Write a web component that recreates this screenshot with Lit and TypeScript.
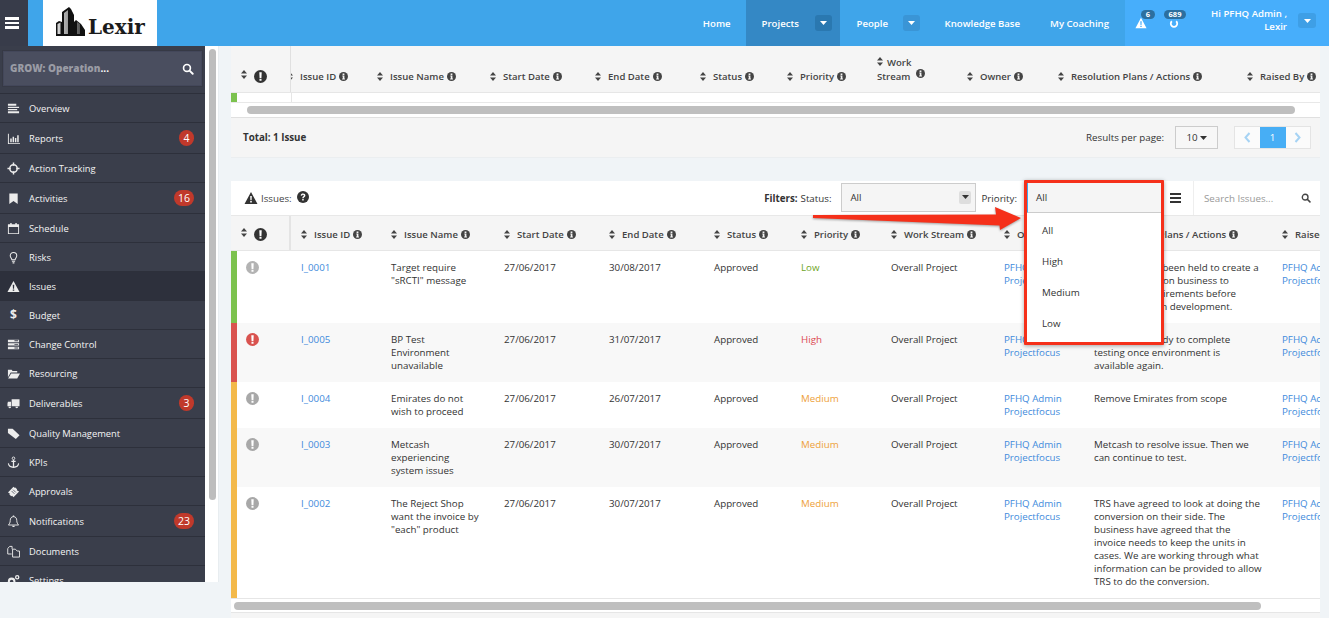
import { LitElement, html, css, svg } from "lit";
import { customElement } from "lit/decorators.js";

const ic = (body: unknown, size = 13) => html`<svg class="ic" width=${size} height=${size} viewBox="0 0 14 14" fill="currentColor">${body}</svg>`;

const icons: Record<string, unknown> = {
  overview: svg`<path d="M1 2h9v2H1zM1 5h12v1.5H1zM1 7.5h10V9H1zM1 10h12v2H1z"/>`,
  reports: svg`<path d="M1 2h1v10h12v1H1z"/><path d="M3.5 7h1.6v4H3.500zM6 5h1.600v6H6zM8.500 6.500h1.600V11H8.500zM11 3.500h1.600V11H11z"/>`,
  target: svg`<circle cx="7" cy="7" r="4" fill="none" stroke="currentColor" stroke-width="1.600"/><path d="M6.200 0.500h1.600v3.500H6.200zM6.200 10h1.600v3.500H6.200zM0.500 6.200H4v1.600H0.500zM10 6.200h3.500v1.600H10z"/>`,
  bookmark: svg`<path d="M2.500 1.500h9v11.500L7 9.800 2.500 13z"/>`,
  calendar: svg`<path fill-rule="evenodd" d="M1 2.500h2.500V1h1.500v1.500h4V1h1.500v1.500H13V13H1zM2 5.500V12h10V5.500z"/>`,
  bulb: svg`<path fill="none" stroke="currentColor" stroke-width="1.100" d="M5.300 9.500C5 7.800 3.500 7 3.500 5a3.500 3.500 0 0 1 7 0c0 2-1.500 2.800-1.800 4.500z"/><path d="M5.300 10.500h3.400v1.200H5.300zM6 12.200h2V13.500H6z"/>`,
  warning: svg`<path fill-rule="evenodd" d="M7 1l6.500 12H.5zM6.200 5l.2 4.300h1.200L7.800 5zM6.200 10.100v1.500h1.600v-1.500z"/>`,
  change: svg`<path d="M1 2h12v2.500H1zM1 5.700h12v2.500H1zM1 9.500h12V12H1z" /><path d="M8 2.500h4v1H8zM8 6.400h4v1H8zM8 10.200h4v1H8z" fill="#3a3e4b"/>`,
  folder: svg`<path d="M1 3h4l1 1.300h5V6H4L1 11zM4.500 7H14l-3 5.500H1.200z"/>`,
  truck: svg`<path d="M5 2.500h8.500v7.500H5zM1 5h3.300v5H.5V7zM1.500 10.500a1.500 1.500 0 1 0 3 0zM9 10.500a1.500 1.500 0 1 0 3 0z"/>`,
  tag: svg`<path fill-rule="evenodd" d="M1 2h5l7.500 7-4 4L1 6.500z"/>`,
  anchor: svg`<path d="M6.300 4.200h1.400V12h-1.400zM4.700 5.200h4.600v1.200H4.700z"/><circle cx="7" cy="2.500" r="1.400" fill="none" stroke="currentColor"/><path fill="none" stroke="currentColor" stroke-width="1.200" d="M1.500 8c.3 2.800 2.500 4 5.500 4.200 3-.2 5.200-1.400 5.500-4.200"/>`,
  ticket: svg`<path d="M1 8l6-6 1 1 .9-.4 2 2-.4 1 2.500 1.500-6 6-1.500-1.500-1 .4-2-2 .4-1z"/><path d="M5 6.500l3 3M6.500 5l3 3" stroke="#3a3e4b" stroke-width=".8"/>`,
  bell: svg`<path fill="none" stroke="currentColor" stroke-width="1" d="M7 1.800c-2.500 0-3.500 1.900-3.500 4C3.500 8.500 2.500 9.500 1.500 10.800h11c-1-1.300-2-2.300-2-5 0-2.100-1-4-3.500-4z"/><path d="M5.500 11.500h3c0 1.800-3 1.800-3 0zM6.300.6h1.400v1.400H6.300z"/>`,
  files: svg`<path fill="none" stroke="currentColor" stroke-width="1" d="M5.500 4.500V1.500H3L.8 3.700v6H5M6 4.500h3L11 6.500h2.500V13H6z"/>`,
  cog: svg`<circle cx="5" cy="8" r="3" fill="none" stroke="currentColor" stroke-width="2.200"/><circle cx="11" cy="3.500" r="1.700" fill="none" stroke="currentColor" stroke-width="1.400"/>`,
  search: svg`<circle cx="5.800" cy="5.800" r="4" fill="none" stroke="currentColor" stroke-width="1.900"/><path d="M8.800 8.800l3.700 3.700" stroke="currentColor" stroke-width="2.200" stroke-linecap="round"/>`,
};

const sort = html`<svg class="sort" width="6" height="9" viewBox="0 0 6 9" fill="currentColor"><path d="M3 0l3 3.500H0zM3 9L0 5.500h6z"/></svg>`;
const info = html`<svg class="info" width="9" height="9" viewBox="0 0 10 10"><circle cx="5" cy="5" r="5" fill="currentColor"/><path d="M4 1.700h2v1.500H4zM3.700 4h2.300v3.300h.6v1H3.500v-1h.7V5h-.5z" fill="#f5f5f5"/></svg>`;
const exclaim = (color: string) => html`<svg class="ex" width="13" height="13" viewBox="0 0 14 14" style="color:${color}"><circle cx="7" cy="7" r="7" fill="currentColor"/><path d="M5.700 2.500h2.600L8 8.500H6zM5.900 9.500h2.200v2.200H5.900z" fill="#fff"/></svg>`;
const question = html`<svg width="12" height="12" viewBox="0 0 14 14"><circle cx="7" cy="7" r="7" fill="#333"/><path d="M4.300 5.200C4.500 3.500 5.700 3 7 3c1.700 0 2.800 1 2.800 2.300 0 1.900-2 1.800-2 3.200H6.100c0-2.200 1.900-2.200 1.900-3.200 0-.5-.4-.8-1-.8-.6 0-1 .3-1.100 1zM6.100 9.300h1.700V11H6.100z" fill="#fff"/></svg>`;
const caret = html`<svg width="7" height="4" viewBox="0 0 7 4" fill="currentColor"><path d="M0 0h7L3.500 4z"/></svg>`;
const burger = html`<svg width="11" height="10" viewBox="0 0 11 10" fill="#333"><path d="M0 0h11v2H0zM0 4h11v2H0zM0 8h11v2H0z"/></svg>`;
const chev = (d: string) => html`<svg width="7" height="11" viewBox="0 0 7 11" fill="none" stroke="#a6d3f4" stroke-width="2"><path d=${d}/></svg>`;

const menu: [string, string, string?][] = [
  ["overview", "Overview"], ["reports", "Reports", "4"], ["target", "Action Tracking"], ["bookmark", "Activities", "16"],
  ["calendar", "Schedule"], ["bulb", "Risks"], ["warning", "Issues"], ["$", "Budget"], ["change", "Change Control"],
  ["folder", "Resourcing"], ["truck", "Deliverables", "3"], ["tag", "Quality Management"], ["anchor", "KPIs"],
  ["ticket", "Approvals"], ["bell", "Notifications", "23"], ["files", "Documents"], ["cog", "Settings"],
];

const heads = ["Issue ID", "Issue Name", "Start Date", "End Date", "Status", "Priority", "Work Stream", "Owner", "Resolution Plans / Actions", "Raised By"];

type Row = { bar: string; sev: string; id: string; name: string[]; s: string; e: string; pr: string; res: string[] };
const rows: Row[] = [
  { bar: "#7cc24e", sev: "#b3b3b3", id: "I_0001", name: ["Target require", "\"sRCTI\" message"], s: "27/06/2017", e: "30/08/2017", pr: "Low",
    res: ["Meetings have been held to create a", "a clearer focus on business to", "finalise all requirements before", "proceeding with development."] },
  { bar: "#d9534f", sev: "#d9534f", id: "I_0005", name: ["BP Test", "Environment", "unavailable"], s: "27/06/2017", e: "31/07/2017", pr: "High",
    res: ["BP are fully ready to complete", "testing once environment is", "available again."] },
  { bar: "#f3b94a", sev: "#a8a8a8", id: "I_0004", name: ["Emirates do not", "wish to proceed"], s: "27/06/2017", e: "26/07/2017", pr: "Medium",
    res: ["Remove Emirates from scope"] },
  { bar: "#f3b94a", sev: "#a8a8a8", id: "I_0003", name: ["Metcash", "experiencing", "system issues"], s: "27/06/2017", e: "30/07/2017", pr: "Medium",
    res: ["Metcash to resolve issue. Then we", "can continue to test."] },
  { bar: "#f3b94a", sev: "#a8a8a8", id: "I_0002", name: ["The Reject Shop", "want the invoice by", "\"each\" product"], s: "27/06/2017", e: "30/07/2017", pr: "Medium",
    res: ["TRS have agreed to look at doing the", "conversion on their side. The", "business have agreed that the", "invoice needs to keep the units in", "cases. We are working through what", "information can be provided to allow", "TRS to do the conversion."] },
];

const lines = (l: string[]) => l.map((t, i) => html`${i ? html`<br />` : ""}${t}`);

@customElement("app-root")
export class AppRoot extends LitElement {
  static styles = css`
    :host { display: block; width: 1329px; height: 618px; overflow: hidden; background: #f0f4f7; font-family: "Open Sans", sans-serif; font-size: 9.75px; line-height: 13px; color: #333; }
    * { box-sizing: border-box; }
    .ic { display: block; flex: none; }
    header { height: 46px; display: flex; background: #3fa5ea; color: #fff; }
    .toggle { width: 28px; background: #383c4a; display: flex; flex-direction: column; justify-content: center; gap: 2px; padding-left: 5px; }
    .toggle i { display: block; width: 14px; height: 2.500px; background: #fff; }
    .logo { margin-left: 15px; width: 114px; background: #fff; display: flex; align-items: flex-end; padding: 0 0 10px 13px; }
    .logo svg { flex: none; }
    .logo span { font: 700 20px/17px "DejaVu Serif", serif; color: #1b1b1b; margin-left: 3px; }
    nav { margin-left: auto; display: flex; align-items: stretch; font-weight: 600; font-size: 9.6px; }
    nav a { display: flex; align-items: center; padding: 0 15px; }
    nav a.on { background: #3488c5; padding: 0 8px 0 16px; width: 94px; justify-content: space-between; }
    nav a.pe { padding: 0 10px 0 17px; width: 90px; justify-content: space-between; }
    .dd { width: 17px; height: 16px; border-radius: 3px; display: flex; align-items: center; justify-content: center; background: #3a95d6; }
    .on .dd { background: #2a78b0; }
    .user { width: 204px; background: #47aefb; position: relative; font-weight: 600; font-size: 9.6px; }
    .alert { position: absolute; top: 17px; color: #fff; }
    .bdg { position: absolute; top: 10px; height: 9px; border-radius: 5px; background: #2c6f9f; font-size: 7.5px; line-height: 9px; text-align: center; font-weight: 700; }
    .hi { position: absolute; right: 42px; top: 7px; text-align: right; line-height: 13px; }
    .user .dd { position: absolute; right: 13px; top: 13px; width: 18px; height: 15px; background: #3e9fe6; }
    .body { display: flex; align-items: flex-start; }
    aside { width: 205px; height: 536px; background: #3a3e4b; overflow: hidden; color: #fff; flex: none; font-size: 9.35px; }
    .sbox { height: 48px; padding: 5px 3px 0 3px; border-bottom: 1px solid #2d303b; }
    .sin { height: 35px; background: #4a4e5f; border: 1px solid #43475a; box-shadow: 0 0 0 1px #363945; display: flex; align-items: center; justify-content: space-between; padding: 0 7px 0 6px; font-weight: 700; font-size: 10px; }
    .sin b { color: #9a9ca5; } .sin em { font-style: normal; color: #fff; }
    .sin svg { color: #fff; }
    .item { display: flex; align-items: center; padding: 7px 11px 7px 7px; border-bottom: 1px solid #2d303b; gap: 9px; color: #f4f4f4; }
    .item.cur { background: #2d303c; }
    .iw { width: 13px; display: flex; justify-content: center; color: #ececec; font-weight: 700; font-size: 12px; line-height: 14px; }
    .item span.t { line-height: 14px; flex: 1; position: relative; top: 1px; }
    .badge { height: 16px; min-width: 15px; padding: 0 4px; border-radius: 8px; background: #c0392b; color: #fff; font-size: 10.500px; line-height: 16px; text-align: center; }
    .strack { width: 14px; height: 536px; background: #fff; border-right: 1px solid #e8edf0; padding: 3px 2px 0 4px; flex: none; }
    .strack i { display: block; height: 451px; background: #bdbdbd; border-radius: 4px; }
    main { width: 1089px; margin-left: 12px; flex: none; }
    .panel { background: #fff; position: relative; }
    .p1 { height: 112px; margin-bottom: 23px; }
    .grid { display: grid; }
    .g1 { grid-template-columns: 60px 76px 113px 105px 105px 87px 90px 90px 91px 189px 83px; }
    .g2 { grid-template-columns: 60px 90px 113px 105px 105px 87px 90px 113px 90px 188px 48px; }
    .wrap { overflow: hidden; width: 1089px; }
    .hd { background: #f5f5f5; border-bottom: 1px solid #e6e6e6; color: #444; font-weight: 600; font-size: 9.55px; }
    .g1.hd { height: 47px; }
    .g2.hd { height: 35px; }
    .h { padding: 0 0 9px 10px; display: flex; align-items: flex-end; white-space: nowrap; overflow: hidden; }
    .h .sort { flex: none; margin-right: 7px; margin-bottom: 2px; color: #444; }
    .h .info { margin-left: 3px; margin-bottom: 2px; flex: none; color: #444; }
    .first { border-right: 2px solid #e4e4e4; align-items: flex-end; }
    .first .sort { margin-bottom: 4px !important; }
    .g1 .first { border-right: 1px solid #e0e0e0; }
    .ws { display: block; position: relative; }
    .ws .sort { margin-right: 4px !important; margin-bottom: 0 !important; }
    .stub { display: flex; height: 10px; border-bottom: 1px solid #e8e8e8; }
    .stub i { width: 6px; background: #7cc24e; }
    .stub u { margin-left: 54px; width: 1px; background: #e6e6e6; }
    .sb { height: 15px; display: flex; align-items: center; border-bottom: 1px solid #e0e0e0; }
    .sb i { height: 8px; border-radius: 4px; background: #bfbfbf; display: block; }
    .foot { height: 40px; background: #f5f5f5; display: flex; align-items: center; padding: 0 9px 0 12px; border-bottom: 1px solid #ebeef0; }
    .foot b { font-weight: 700; color: #333; }
    .rpp { margin-left: auto; }
    .psel { margin-left: 11px; width: 43px; height: 23px; border: 1px solid #ccc; display: flex; align-items: center; justify-content: center; gap: 2px; background: #f7f7f7; }
    .pg { margin-left: 16px; display: flex; height: 23px; border: 1px solid #e4e4e4; background: #fbfbfb; width: 77px; }
    .pg span { flex: 1; display: flex; align-items: center; justify-content: center; }
    .pg span.a { background: #47aef5; color: #fff; width: 26px; flex: none; }
    .tool { height: 35px; display: flex; align-items: center; border-bottom: 1px solid #e8e8e8; background: #fff; position: relative; }
    .tt { display: flex; align-items: center; padding-left: 13px; color: #444; }
    .tt .ic { color: #333; margin-right: 3px; }
    .tt svg:last-child { margin-left: 5px; margin-top: -2px; }
    .filters { margin-left: auto; display: flex; align-items: center; height: 100%; }
    .filters b { font-weight: 700; margin-right: 3px; }
    .sel { height: 29px; background: #f5f5f5; border: 1px solid #ccc; display: flex; align-items: center; justify-content: space-between; padding: 0 4px 0 8px; }
    .s1 { width: 135px; margin: -2px 5px 0 10px; }
    .sel em { width: 12px; height: 13px; background: #dedede; border-radius: 2px; display: flex; align-items: center; justify-content: center; font-style: normal; }
    .prio { width: 134px; margin-left: 10px; height: 29px; position: relative; }
    .box { position: absolute; left: -3px; top: -4px; width: 140px; height: 165px; border: 3px solid #f5301a; border-radius: 1px; background: #fff; box-shadow: 0 1px 4px rgba(0,0,0,.35); z-index: 3; }
    .box .cur { height: 30px; background: #f5f5f5; border-bottom: 1px solid #ccc; display: flex; align-items: center; padding-left: 8px; border-left: 1px solid #3fa5ea; }
    .box div.o { height: 31px; display: flex; align-items: center; padding-left: 15px; }
    .box .list { padding-top: 2px; }
    .burger { margin-left: 9px; width: 23px; height: 100%; display: flex; align-items: center; }
    .find { width: 127px; height: 100%; border-left: 1px solid #eee; display: flex; align-items: center; justify-content: space-between; padding: 0 9px 0 10px; color: #999; }
    .find svg { color: #444; }
    .arrow { position: absolute; left: 580px; top: 24px; z-index: 4; overflow: visible; }
    .c { padding: 10px 0 10px 10px; white-space: nowrap; overflow: hidden; }
    .tr:nth-child(odd) { background: #f8f8f8; }
    .sevc { padding-left: 9px; border-left: 6px solid; }
    a.lnk { color: #428bdc; }
    .Low { color: #6ea51e; } .High { color: #dc4a52; } .Medium { color: #eea13a; }
    .sb2 { height: 15px; border-top: 1px solid #e6e6e6; border-bottom: 1px solid #e6e6e6; background: #fff; display: flex; align-items: center; padding-left: 3px; }
    .sb2 i { width: 1027px; height: 8px; border-radius: 4px; background: #bfbfbf; }
    .tail { height: 10px; background: #f5f5f5; }
  `;

  render() {
    return html`
      <header>
        <div class="toggle"><i></i><i></i><i></i></div>
        <div class="logo">
          <svg width="29" height="30" viewBox="0 0 29 30">
            <defs><linearGradient id="g" x1="0" x2="1"><stop offset="0" stop-color="#d8d8d8"/><stop offset="1" stop-color="#555"/></linearGradient></defs>
            <path fill="#111" d="M0 30V17l3-2 3 1V6l7-5 2 2 3 6v7l2-2 5 4 4 6v9z"/>
            <path fill="url(#g)" d="M1.500 28V18l3-1.500V28zM8 28V7l4-3v24zM21 28V16l3 2v10z"/>
          </svg>
          <span>Lexir</span>
        </div>
        <nav>
          <a>Home</a>
          <a class="on">Projects<span class="dd">${caret}</span></a>
          <a class="pe">People<span class="dd">${caret}</span></a>
          <a>Knowledge Base</a>
          <a style="padding-right:16px">My Coaching</a>
        </nav>
        <div class="user">
          <span class="alert" style="left:10px">${ic(icons.warning, 12)}</span>
          <span class="bdg" style="left:16px;width:14px">6</span>
          <span class="alert" style="left:44px;top:18px">${ic(svg`<path fill="none" stroke="currentColor" stroke-width="2.500" d="M4 4.500a4.500 4.500 0 1 0 6 0"/>`, 10)}</span>
          <span class="bdg" style="left:39px;width:22px">689</span>
          <span class="hi">Hi PFHQ Admin ,<br />Lexir</span>
          <span class="dd">${caret}</span>
        </div>
      </header>
      <div class="body">
        <aside>
          <div class="sbox"><div class="sin"><span><b>GROW: Operation</b><em>...</em></span>${ic(icons.search, 12)}</div></div>
          ${menu.map(([i, t, b]) => html`<div class="item ${t === "Issues" ? "cur" : ""}">
            <span class="iw">${i === "$" ? "$" : ic(icons[i])}</span><span class="t">${t}</span>${b ? html`<span class="badge">${b}</span>` : ""}
          </div>`)}
        </aside>
        <div class="strack"><i></i></div>
        <main>
          <section class="panel p1">
            <div class="wrap">
              <div class="grid g1 hd">
                <div class="h first">${sort}${exclaim("#333")}</div>
                ${heads.map((h, i) => h === "Work Stream"
                  ? html`<div class="h"><span class="ws">${sort}Work<br />Stream ${info}</span></div>`
                  : html`<div class="h" style=${i === 0 ? "padding-left:0" : ""}><span style=${i === 0 ? "margin-left:-4px;display:flex;align-items:flex-end" : "display:flex;align-items:flex-end"}>${sort}${h}${info}</span></div>`)}
              </div>
            </div>
            <div class="stub"><i></i><u></u></div>
            <div class="sb"><i style="margin-left:16px;width:1048px"></i></div>
            <div class="foot"><b>Total: 1 Issue</b><span class="rpp">Results per page:</span><span class="psel">10 ${caret}</span>
              <div class="pg"><span>${chev("M5.500 1L1.500 5.500l4 4.500")}</span><span class="a">1</span><span>${chev("M1.500 1l4 4.500-4 4.500")}</span></div></div>
          </section>
          <section class="panel">
            <div class="tool">
              <div class="tt">${ic(icons.warning, 14)}Issues:${question}</div>
              <div class="filters">
                <b>Filters:</b>Status:
                <div class="sel s1">All<em>${caret}</em></div>
                Priority:
                <div class="prio">
                  <div class="box">
                    <div class="cur">All</div>
                    <div class="list"><div class="o">All</div><div class="o">High</div><div class="o">Medium</div><div class="o">Low</div></div>
                  </div>
                </div>
                <div class="burger">${burger}</div>
                <div class="find">Search Issues...${ic(icons.search, 10)}</div>
              </div>
            </div>
            <div class="wrap">
              <div class="grid g2 hd">
                <div class="h first">${sort}${exclaim("#333")}</div>
                ${heads.map((h) => html`<div class="h"><span style="display:flex;align-items:flex-end">${sort}${h}${info}</span></div>`)}
              </div>
              ${rows.map((r) => html`<div class="grid g2 tr">
                <div class="c sevc" style="border-left-color:${r.bar}">${exclaim(r.sev)}</div>
                <div class="c"><a class="lnk">${r.id}</a></div>
                <div class="c">${lines(r.name)}</div>
                <div class="c">${r.s}</div>
                <div class="c">${r.e}</div>
                <div class="c">Approved</div>
                <div class="c"><span class=${r.pr}>${r.pr}</span></div>
                <div class="c">Overall Project</div>
                <div class="c"><a class="lnk">PFHQ Admin<br />Projectfocus</a></div>
                <div class="c">${lines(r.res)}</div>
                <div class="c"><a class="lnk">PFHQ Admin<br />Projectfocus</a></div>
              </div>`)}
            </div>
            <div class="sb2"><i></i></div>
            <div class="tail"></div>
            <svg class="arrow" width="215" height="26" viewBox="0 0 215 26">
              <path d="M2 10l183-.5-1-7.500 26 11-21 12-.5-4.500L2 13z" fill="#f5301a" style="filter:drop-shadow(0 1px 1px rgba(0,0,0,.35))"/>
            </svg>
          </section>
        </main>
      </div>
    `;
  }
}
